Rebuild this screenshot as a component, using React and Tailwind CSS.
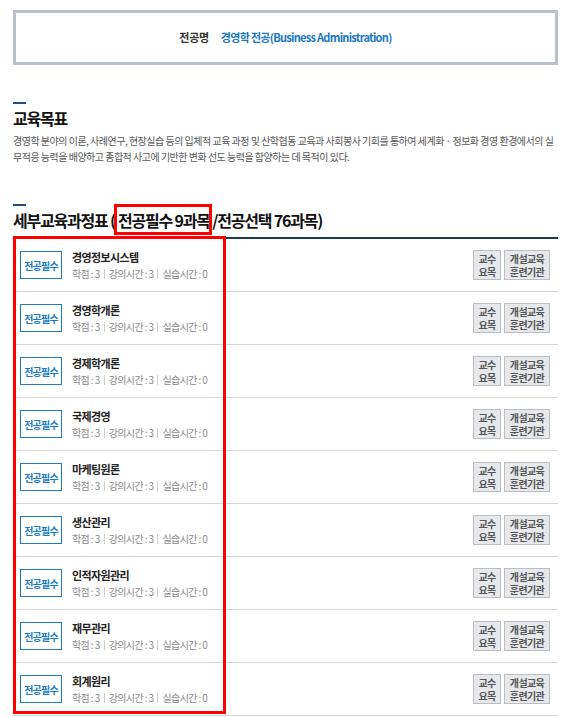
const courses = [
  '경영정보시스템',
  '경영학개론',
  '경제학개론',
  '국제경영',
  '마케팅원론',
  '생산관리',
  '인적자원관리',
  '재무관리',
  '회계원리',
]

function CourseRow({ name }) {
  return (
    <li className="h-[53px] border-b border-[#d6d6d6] flex items-center pl-[7px] pr-[8px]">
      <div className="w-[42px] h-[28px] border border-[#1b7bc4] flex items-center justify-center text-[10px] font-bold text-[#1b7bc4] tracking-[-0.8px]">
        전공필수
      </div>
      <div className="ml-[10px] flex-1">
        <p className="text-[11px] font-bold text-[#222] leading-none tracking-[-0.6px]">{name}</p>
        <p className="mt-[6px] text-[10px] text-[#8a8a8a] leading-none tracking-[-0.6px] flex items-center">
          <span>학점 : 3</span>
          <span className="mx-[4px] h-[10px] w-px bg-[#cfcfcf]" />
          <span>강의시간 : 3</span>
          <span className="mx-[4px] h-[10px] w-px bg-[#cfcfcf]" />
          <span>실습시간 : 0</span>
        </p>
      </div>
      <div className="flex gap-[3px]">
        <button className="w-[28px] h-[30px] bg-[#e6e8ec] border border-[#b9bdc5] text-[10px] font-bold text-[#555] leading-[13px] tracking-[-0.6px]">
          교수
          <br />
          요목
        </button>
        <button className="w-[46px] h-[30px] bg-[#e6e8ec] border border-[#b9bdc5] text-[10px] font-bold text-[#555] leading-[13px] tracking-[-0.6px]">
          개설교육
          <br />
          훈련기관
        </button>
      </div>
    </li>
  )
}

export default function App() {
  return (
    <div className="min-h-screen bg-white px-[13px] pt-[10px] font-['Noto_Sans_CJK_KR','Noto_Sans',sans-serif] text-[#222]">
      {/* 전공명 */}
      <div className="h-[55px] border-[3px] border-[#b8c0cc] flex items-center justify-center text-[11px] font-bold">
        <span className="text-[#333] tracking-[-0.3px]">전공명</span>
        <span className="ml-[12px] text-[#1a78c2] tracking-[-0.7px]">경영학 전공(Business Administration)</span>
      </div>

      {/* 교육목표 */}
      <section className="mt-[37px]">
        <div className="w-[13px] h-[2px] bg-[#1d4f7a]" />
        <h2 className="mt-[4px] text-[16px] font-bold leading-[20px] tracking-[-1.2px] text-[#111]">교육목표</h2>
        <p className="mt-[5px] text-[10px] leading-[16px] text-[#555] tracking-[-0.5px] whitespace-nowrap">
          경영학 분야의 이론, 사례연구, 현장실습 등의 입체적 교육 과정 및 산학협동 교육과 사회봉사 기회를 통하여 세계화 · 정보화 경영 환경에서의 실
          <br />
          무적응 능력을 배양하고 종합적 사고에 기반한 변화 선도 능력을 함양하는 데 목적이 있다.
        </p>
      </section>

      {/* 세부교육과정표 */}
      <section className="mt-[39px]">
        <div className="w-[13px] h-[2px] bg-[#1d4f7a]" />
        <h2 className="mt-[4px] text-[16px] font-bold leading-[20px] tracking-[-1.2px] text-[#111]">
          {'세부교육과정표 ('}
          <span className="relative ml-[3px]">
            전공필수 9과목
            <span className="absolute -left-[4px] -right-[2px] -top-[4px] -bottom-[3px] border-[3px] border-[#ff0000]" />
          </span>
          {' /전공선택 76과목)'}
        </h2>
        <div className="relative mt-[7px] border-t-2 border-[#1e3a5c]">
          <ul>
            {courses.map((c) => (
              <CourseRow key={c} name={c} />
            ))}
          </ul>
          <div className="absolute left-0 -top-[3px] w-[213px] h-[478px] border-[3px] border-[#ff0000] pointer-events-none" />
        </div>
      </section>
    </div>
  )
}
